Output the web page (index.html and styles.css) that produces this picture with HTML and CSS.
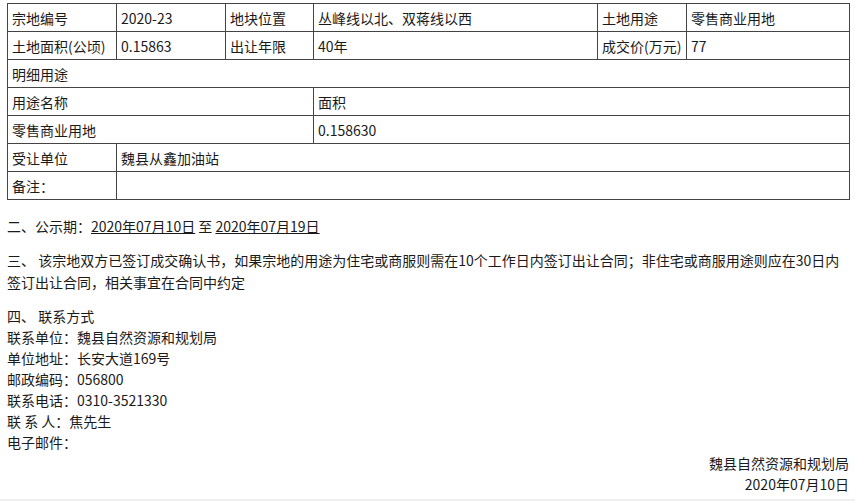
FILE: index.html
```html
<!DOCTYPE html>
<html lang="zh-CN">

<head>
    <meta charset="UTF-8">
    <meta name="viewport" content="width=device-width, initial-scale=1.0">
    <title>出让结果公示</title>
    <link rel="stylesheet" href="styles.css">
</head>

<body>
    <div id="page">
        <table id="info">
            <colgroup>
                <col class="c1">
                <col class="c2">
                <col class="c3">
                <col class="c4">
                <col class="c5">
                <col class="c6">
            </colgroup>
            <tr>
                <td>宗地编号</td>
                <td>2020-23</td>
                <td>地块位置</td>
                <td>丛峰线以北、双蒋线以西</td>
                <td>土地用途</td>
                <td>零售商业用地</td>
            </tr>
            <tr>
                <td>土地面积(公顷)</td>
                <td>0.15863</td>
                <td>出让年限</td>
                <td>40年</td>
                <td>成交价(万元)</td>
                <td>77</td>
            </tr>
            <tr>
                <td colspan="6">明细用途</td>
            </tr>
            <tr>
                <td colspan="3">用途名称</td>
                <td colspan="3">面积</td>
            </tr>
            <tr>
                <td colspan="3">零售商业用地</td>
                <td colspan="3">0.158630</td>
            </tr>
            <tr>
                <td>受让单位</td>
                <td colspan="5">魏县从鑫加油站</td>
            </tr>
            <tr>
                <td>备注：</td>
                <td colspan="5"></td>
            </tr>
        </table>

        <p class="para first">二、公示期：<u>2020年07月10日</u> 至 <u>2020年07月19日</u></p>
        <p class="para">三、 该宗地双方已签订成交确认书，如果宗地的用途为住宅或商服则需在10个工作日内签订出让合同；非住宅或商服用途则应在30日内签订出让合同，相关事宜在合同中约定</p>

        <div class="contact">
            <div>四、 联系方式</div>
            <div>联系单位：魏县自然资源和规划局</div>
            <div>单位地址：长安大道169号</div>
            <div>邮政编码：056800</div>
            <div>联系电话：0310-3521330</div>
            <div>联 系 人：焦先生</div>
            <div>电子邮件：</div>
            <div class="sign">魏县自然资源和规划局</div>
            <div class="sign">2020年07月10日</div>
        </div>
    </div>
</body>

</html>
```

FILE: styles.css
```css
* {
    margin: 0;
    padding: 0;
}

html {
    background-color: #f0f0f0;
}

body {
    background-color: #fff;
    height: 499px;
    font-family: "Microsoft YaHei", "Noto Sans CJK SC", "Noto Sans", sans-serif;
    font-size: 14px;
    color: #1a1a1a;
}

#page {
    padding: 3px 7px 0 7px;
    width: 842px;
}

#info {
    width: 842px;
    border-collapse: collapse;
    table-layout: fixed;
    border: 1px solid #000;
}

#info .c1 { width: 109px; }
#info .c2 { width: 109px; }
#info .c3 { width: 88px; }
#info .c4 { width: 284px; }
#info .c5 { width: 89px; }
#info .c6 { width: 163px; }

#info td {
    height: 27px;
    border: 1px solid #444;
    padding: 0 4px;
    line-height: 20px;
    white-space: nowrap;
    overflow: hidden;
}

.para {
    line-height: 22px;
    margin-top: 12px;
}

.para.first {
    margin-top: 15px;
}

.para u {
    text-decoration: underline;
}

.contact {
    margin-top: 13px;
    line-height: 21px;
}

.sign {
    text-align: right;
}
```
